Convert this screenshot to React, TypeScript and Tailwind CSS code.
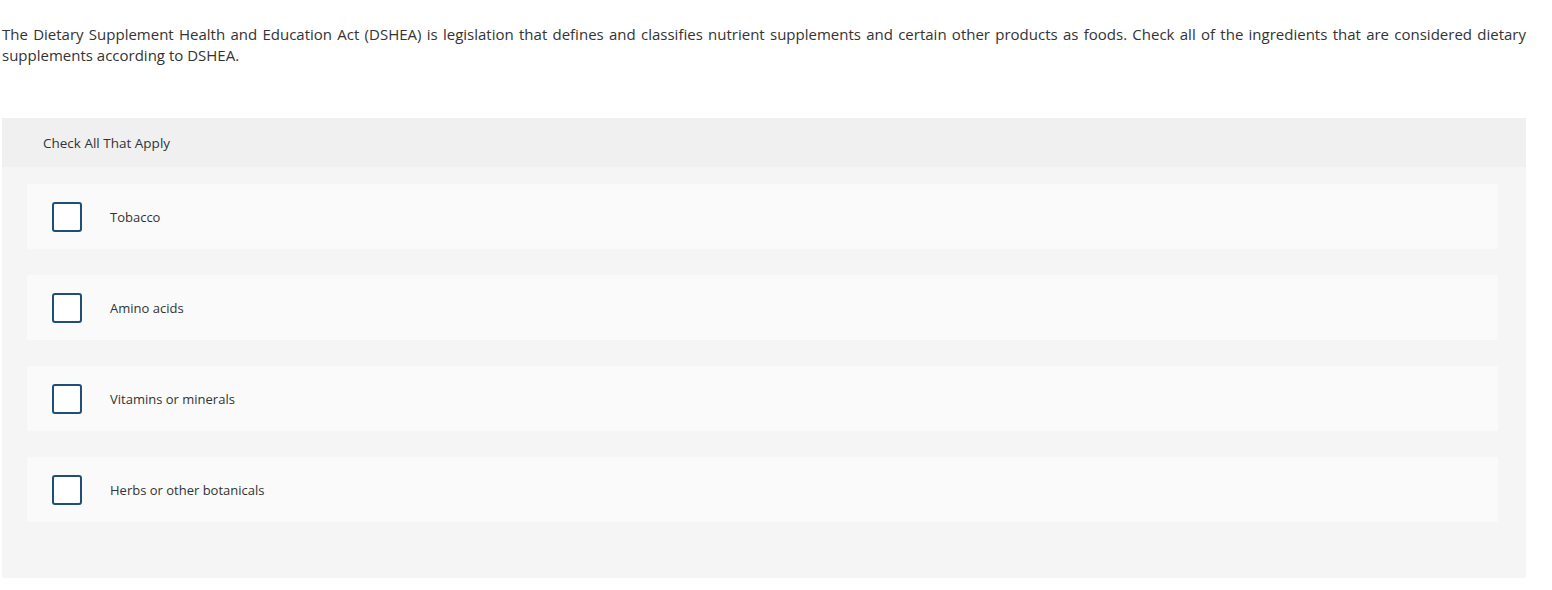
const options = ["Tobacco", "Amino acids", "Vitamins or minerals", "Herbs or other botanicals"];

export default function App() {
  return (
    <div className="min-h-[590px] bg-white font-['Open_Sans',sans-serif] text-[#333]">
      <div className="w-[1524px] ml-[2px] pt-[24px]">
        <p className="text-[15px] leading-[21px] text-justify text-[#333]">
          The Dietary Supplement Health and Education Act (DSHEA) is legislation that defines and classifies nutrient
          supplements and certain other products as foods. Check all of the ingredients that are considered dietary
          supplements according to DSHEA.
        </p>

        <div className="mt-[52px] bg-[#f5f5f5] rounded-[2px] pb-[56px]">
          <div className="h-[49px] bg-[#f0f0f0] flex items-center pt-[2px] pl-[41px] text-[13.5px] text-[#333]">
            Check All That Apply
          </div>
          <div className="pt-[17px] pl-[25px] pr-[28px] flex flex-col gap-[26px]">
            {options.map((o) => (
              <label key={o} className="h-[65px] bg-[#fafafa] rounded-[2px] flex items-center pl-[25px] cursor-pointer">
                <span className="w-[30px] h-[30px] mt-[1px] border-2 border-[#1f4e78] rounded-[3px] bg-white" />
                <span className="ml-[28px] pt-[3px] text-[13px] text-[#333]">{o}</span>
              </label>
            ))}
          </div>
        </div>
      </div>
    </div>
  );
}
